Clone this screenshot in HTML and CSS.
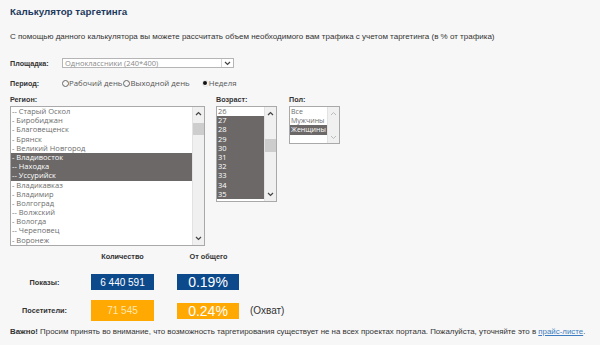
FILE: index.html
```html
<!DOCTYPE html>
<html lang="ru">
<head>
    <meta charset="UTF-8">
    <title>Калькулятор таргетинга</title>
    <link rel="stylesheet" href="styles.css">
</head>
<body>
    <div class="calc">
        <h1 class="title">Калькулятор таргетинга</h1>
        <p class="intro">С помощью данного калькулятора вы можете рассчитать объем необходимого вам трафика с учетом таргетинга (в % от трафика)</p>

        <!-- Площадка -->
        <div class="field-row site-row">
            <div class="field-label">Площадка:</div>
            <div class="select-box">
                <span class="select-value">Одноклассники (240*400)</span>
                <span class="select-arrow">
                    <svg width="7" height="5" viewBox="0 0 7 5"><polyline points="1,1 3.5,3.5 6,1" fill="none" stroke="#444" stroke-width="1.2"/></svg>
                </span>
            </div>
        </div>

        <!-- Период -->
        <div class="field-row period-row">
            <div class="field-label">Период:</div>
            <div class="radios">
                <span class="radio"></span><span class="radio-text">Рабочий день</span>
                <span class="radio"></span><span class="radio-text">Выходной день</span>
                <span class="radio checked"></span><span class="radio-text">Неделя</span>
            </div>
        </div>

        <!-- Списки -->
        <div class="lists">
            <div class="list-col region-col">
                <div class="col-label">Регион:</div>
                <div class="listbox region-box">
                    <div class="list-items">
                        <div class="item">-- Старый Оскол</div>
                        <div class="item">- Биробиджан</div>
                        <div class="item">- Благовещенск</div>
                        <div class="item">- Брянск</div>
                        <div class="item">- Великий Новгород</div>
                        <div class="item selected">- Владивосток</div>
                        <div class="item selected">-- Находка</div>
                        <div class="item selected">-- Уссурийск</div>
                        <div class="item">- Владикавказ</div>
                        <div class="item">- Владимир</div>
                        <div class="item">- Волгоград</div>
                        <div class="item">-- Волжский</div>
                        <div class="item">- Вологда</div>
                        <div class="item">-- Череповец</div>
                        <div class="item">- Воронеж</div>
                    </div>
                    <div class="scrollbar">
                        <span class="arrow up"><svg width="7" height="5" viewBox="0 0 7 5"><polyline points="1,4 3.5,1.5 6,4" fill="none" stroke="#444" stroke-width="1.2"/></svg></span>
                        <span class="thumb region-thumb"></span>
                        <span class="arrow down"><svg width="7" height="5" viewBox="0 0 7 5"><polyline points="1,1 3.5,3.5 6,1" fill="none" stroke="#444" stroke-width="1.2"/></svg></span>
                    </div>
                </div>
            </div>

            <div class="list-col age-col">
                <div class="col-label">Возраст:</div>
                <div class="listbox age-box">
                    <div class="list-items">
                        <div class="item">26</div>
                        <div class="item selected">27</div>
                        <div class="item selected">28</div>
                        <div class="item selected">29</div>
                        <div class="item selected">30</div>
                        <div class="item selected">31</div>
                        <div class="item selected">32</div>
                        <div class="item selected">33</div>
                        <div class="item selected">34</div>
                        <div class="item selected">35</div>
                    </div>
                    <div class="scrollbar">
                        <span class="arrow up"><svg width="7" height="5" viewBox="0 0 7 5"><polyline points="1,4 3.5,1.5 6,4" fill="none" stroke="#444" stroke-width="1.2"/></svg></span>
                        <span class="thumb age-thumb"></span>
                        <span class="arrow down"><svg width="7" height="5" viewBox="0 0 7 5"><polyline points="1,1 3.5,3.5 6,1" fill="none" stroke="#444" stroke-width="1.2"/></svg></span>
                    </div>
                </div>
            </div>

            <div class="list-col sex-col">
                <div class="col-label">Пол:</div>
                <div class="listbox sex-box">
                    <div class="list-items">
                        <div class="item">Все</div>
                        <div class="item">Мужчины</div>
                        <div class="item selected">Женщины</div>
                    </div>
                    <div class="scrollbar disabled">
                        <span class="arrow up"><svg width="7" height="5" viewBox="0 0 7 5"><polyline points="1,4 3.5,1.5 6,4" fill="none" stroke="#bbb" stroke-width="1"/></svg></span>
                        <span class="arrow down"><svg width="7" height="5" viewBox="0 0 7 5"><polyline points="1,1 3.5,3.5 6,1" fill="none" stroke="#bbb" stroke-width="1"/></svg></span>
                    </div>
                </div>
            </div>
        </div>

        <!-- Результаты -->
        <div class="results">
            <div></div>
            <div class="res-head">Количество</div>
            <div class="res-head">От общего</div>
            <div></div>

            <div class="res-label row-shows">Показы:</div>
            <div class="res-box blue count">6 440 591</div>
            <div class="res-box blue share">0.19%</div>
            <div></div>

            <div class="res-label row-visits">Посетители:</div>
            <div class="res-box orange count visits-count">71 545</div>
            <div class="res-box orange share visits-share">0.24%</div>
            <div class="reach">(Охват)</div>
        </div>

        <p class="note"><b>Важно!</b> Просим принять во внимание, что возможность таргетирования существует не на всех проектах портала. Пожалуйста, уточняйте это в <a href="#">прайс-листе</a>.</p>
    </div>
</body>
</html>
```

FILE: styles.css
```css
* {
    margin: 0;
    padding: 0;
    box-sizing: border-box;
}

body {
    background-color: #f7f7f7;
    color: #333;
    font-family: "Liberation Sans", Arial, sans-serif;
}

.calc {
    padding: 0 10px;
}

.title {
    margin-top: 6px;
    font-size: 9.8px;
    line-height: 12px;
    font-weight: bold;
    color: #1d3a5e;
}

.intro {
    margin-top: 14px;
    font-size: 8px;
    line-height: 10px;
    color: #333;
}

/* Form rows */
.field-row {
    display: flex;
    align-items: center;
    height: 10px;
}

.site-row {
    margin-top: 16px;
}

.period-row {
    margin-top: 10px;
}

.field-label {
    width: 52px;
    font-size: 7.2px;
    font-weight: bold;
    color: #333;
}

.select-box {
    width: 172px;
    height: 10px;
    background-color: #fff;
    border: 1px solid #b5b5b5;
    display: flex;
    align-items: center;
}

.select-value {
    flex-grow: 1;
    padding-left: 2px;
    font-family: "Open Sans", sans-serif;
    font-size: 7.5px;
    line-height: 8px;
    color: #8a8a8a;
}

.select-arrow {
    width: 12px;
    height: 100%;
    border-left: 1px solid #d5d5d5;
    display: flex;
    align-items: center;
    justify-content: center;
}

.radios {
    display: flex;
    align-items: center;
    font-family: "Open Sans", sans-serif;
    font-size: 7.8px;
    color: #555;
}

.radio {
    width: 7px;
    height: 7px;
    border: 1px solid #666;
    border-radius: 50%;
    display: flex;
    align-items: center;
    justify-content: center;
}

.radio.checked {
    border-color: #e2e2e2;
    margin-left: 11px;
}

.radio.checked::after {
    content: "";
    width: 4px;
    height: 4px;
    border-radius: 50%;
    background-color: #111;
}

.radio-text {
    margin-right: 1px;
}

/* Lists */
.lists {
    display: flex;
    align-items: flex-start;
    margin-top: 7px;
}

.col-label {
    font-size: 7.2px;
    font-weight: bold;
    line-height: 9px;
    margin-bottom: 2px;
    color: #333;
}

.region-col {
    width: 195px;
    margin-right: 11px;
}

.age-col {
    width: 61px;
    margin-right: 12px;
}

.sex-col {
    width: 51px;
}

.listbox {
    display: flex;
    background-color: #fff;
    border: 1px solid #a9a9a9;
    overflow: hidden;
    font-family: "Open Sans", sans-serif;
    font-size: 7.5px;
    color: #6e6e6e;
}

.region-box {
    height: 140px;
}

.age-box {
    height: 96px;
}

.sex-box {
    height: 38px;
    font-size: 7px;
}

.list-items {
    flex-grow: 1;
    overflow: hidden;
}

.item {
    height: 9.2px;
    line-height: 9.2px;
    padding-left: 1px;
    white-space: nowrap;
}

.item.selected {
    background-color: #6b6867;
    color: #fff;
}

.scrollbar {
    width: 12px;
    flex-shrink: 0;
    background-color: #f0f0f0;
    border-left: 1px solid #e2e2e2;
    display: flex;
    flex-direction: column;
    align-items: center;
}

.arrow {
    width: 100%;
    height: 13px;
    display: flex;
    align-items: center;
    justify-content: center;
}

.arrow.down {
    margin-top: auto;
}

.thumb {
    width: 100%;
    background-color: #cdcdcd;
}

.region-thumb {
    height: 12px;
    margin-top: 3px;
}

.age-thumb {
    height: 13px;
    margin-top: 19px;
}

.scrollbar.disabled .arrow {
    height: 12px;
}

/* Results */
.results {
    display: grid;
    grid-template-columns: 81px 86px 73px auto;
    align-items: center;
    margin-top: 6px;
}

.res-head {
    height: 10px;
    line-height: 10px;
    font-size: 7.3px;
    font-weight: bold;
    color: #333;
    width: 63px;
    text-align: center;
}

.res-label {
    font-size: 7.3px;
    font-weight: bold;
    color: #333;
    text-align: center;
    padding-right: 12px;
}

.row-shows {
    margin-top: 12px;
}

.row-visits {
    margin-top: 10px;
}

.res-box {
    height: 16px;
    color: #fff;
    display: flex;
    align-items: center;
    justify-content: center;
}

.res-box.count {
    width: 63px;
    font-size: 10px;
}

.res-box.share {
    width: 62px;
    font-size: 14px;
}

.res-box.blue {
    background-color: #0d4a8c;
    margin-top: 12px;
}

.res-box.orange {
    background-color: #ffa902;
    margin-top: 10px;
}

.visits-count {
    height: 21px;
    font-size: 11px;
    color: #ffe7b0;
}

.reach {
    margin-top: 10px;
    font-size: 10px;
    color: #333;
}

.note {
    margin-top: 6px;
    font-size: 7.9px;
    line-height: 10px;
    white-space: nowrap;
    color: #333;
}

.note a {
    color: #3d7cc0;
}
```
